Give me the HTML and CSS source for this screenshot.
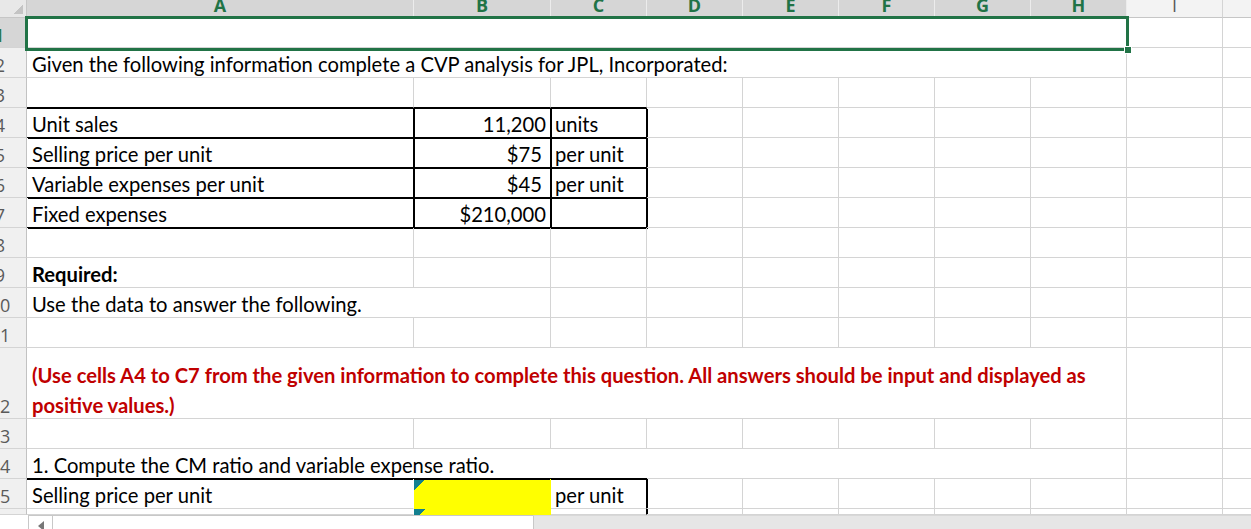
FILE: index.html
```html
<!DOCTYPE html>
<html>
<head>
<meta charset="utf-8">
<title>CVP analysis</title>
<link rel="stylesheet" href="styles.css">
</head>
<body>
<div class="sheet">
  <div class="grid">
    <div class="corner"></div>
    <div class="ch sel"><span>A</span></div>
    <div class="ch sel"><span>B</span></div>
    <div class="ch sel"><span>C</span></div>
    <div class="ch sel"><span>D</span></div>
    <div class="ch sel"><span>E</span></div>
    <div class="ch sel"><span>F</span></div>
    <div class="ch sel"><span>G</span></div>
    <div class="ch sel"><span>H</span></div>
    <div class="ch"><span>I</span></div>
    <div class="ch"><span>J</span></div>

    <div class="rh rsel"><span>1</span></div>
    <div class="c span8"></div>
    <div class="c"></div><div class="c"></div>

    <div class="rh"><span>2</span></div>
    <div class="c span8">Given the following information complete a CVP analysis for JPL, Incorporated:</div>
    <div class="c"></div><div class="c"></div>

    <div class="rh"><span>3</span></div>
    <div class="c bt"></div><div class="c bt"></div><div class="c bt"></div>
    <div class="c"></div><div class="c"></div><div class="c"></div><div class="c"></div><div class="c"></div><div class="c"></div><div class="c"></div>

    <div class="rh"><span>4</span></div>
    <div class="c bx">Unit sales</div>
    <div class="c bx num">11,200</div>
    <div class="c bx unit">units</div>
    <div class="c"></div><div class="c"></div><div class="c"></div><div class="c"></div><div class="c"></div><div class="c"></div><div class="c"></div>

    <div class="rh"><span>5</span></div>
    <div class="c bx">Selling price per unit</div>
    <div class="c bx num cur">$75</div>
    <div class="c bx unit">per unit</div>
    <div class="c"></div><div class="c"></div><div class="c"></div><div class="c"></div><div class="c"></div><div class="c"></div><div class="c"></div>

    <div class="rh"><span>6</span></div>
    <div class="c bx">Variable expenses per unit</div>
    <div class="c bx num cur">$45</div>
    <div class="c bx unit">per unit</div>
    <div class="c"></div><div class="c"></div><div class="c"></div><div class="c"></div><div class="c"></div><div class="c"></div><div class="c"></div>

    <div class="rh"><span>7</span></div>
    <div class="c bx">Fixed expenses</div>
    <div class="c bx num">$210,000</div>
    <div class="c bx unit"></div>
    <div class="c"></div><div class="c"></div><div class="c"></div><div class="c"></div><div class="c"></div><div class="c"></div><div class="c"></div>

    <div class="rh"><span>8</span></div>
    <div class="c"></div><div class="c"></div><div class="c"></div><div class="c"></div><div class="c"></div><div class="c"></div><div class="c"></div><div class="c"></div><div class="c"></div><div class="c"></div>

    <div class="rh"><span>9</span></div>
    <div class="c bold">Required:</div>
    <div class="c"></div><div class="c"></div><div class="c"></div><div class="c"></div><div class="c"></div><div class="c"></div><div class="c"></div><div class="c"></div><div class="c"></div>

    <div class="rh"><span>10</span></div>
    <div class="c span2">Use the data to answer the following.</div>
    <div class="c"></div><div class="c"></div><div class="c"></div><div class="c"></div><div class="c"></div><div class="c"></div><div class="c"></div><div class="c"></div>

    <div class="rh"><span>11</span></div>
    <div class="c"></div><div class="c"></div><div class="c"></div><div class="c"></div><div class="c"></div><div class="c"></div><div class="c"></div><div class="c"></div><div class="c"></div><div class="c"></div>

    <div class="rh"><span>12</span></div>
    <div class="c span8 red"><p>(Use cells A4 to C7 from the given information to complete this question. All answers should be input and displayed as<br>positive values.)</p></div>
    <div class="c"></div><div class="c"></div>

    <div class="rh"><span>13</span></div>
    <div class="c"></div><div class="c"></div><div class="c"></div><div class="c"></div><div class="c"></div><div class="c"></div><div class="c"></div><div class="c"></div><div class="c"></div><div class="c"></div>

    <div class="rh"><span>14</span></div>
    <div class="c span8">1. Compute the CM ratio and variable expense ratio.</div>
    <div class="c"></div><div class="c"></div>

    <div class="rh"><span>15</span></div>
    <div class="c tb noright">Selling price per unit</div>
    <div class="c tb input err"></div>
    <div class="c tb unit rb">per unit</div>
    <div class="c"></div><div class="c"></div><div class="c"></div><div class="c"></div><div class="c"></div><div class="c"></div><div class="c"></div>

    <div class="rh"></div>
    <div class="c noright"></div>
    <div class="c input err"></div>
    <div class="c rb"></div>
    <div class="c"></div><div class="c"></div><div class="c"></div><div class="c"></div><div class="c"></div><div class="c"></div><div class="c"></div>
  </div>

  <div class="selection"><span class="handle"></span></div>

  <div class="hbar">
    <div class="lead"></div>
    <div class="btn"><span class="arrow"></span></div>
    <div class="tabs"></div>
    <div class="track"></div>
  </div>
</div>
</body>
</html>
```

FILE: styles.css
```css
* {
  box-sizing: border-box;
  margin: 0;
  padding: 0;
}

html, body {
  width: 1251px;
  height: 529px;
  overflow: hidden;
  background: #ffffff;
}

body {
  font-family: Lato, "Liberation Sans", sans-serif;
  color: #000000;
}

.sheet {
  position: relative;
  width: 1251px;
  height: 529px;
  overflow: hidden;
  display: flex;
  flex-direction: column;
}

.grid {
  flex: none;
  display: grid;
  grid-template-columns: 27px 387px 137px repeat(8, 96px);
  grid-template-rows: 18px repeat(11, 30px) 71px 30px 30px 30px 6px;
  width: 1319px;
}

/* column headers */
.corner {
  background:
    linear-gradient(135deg, transparent 60%, #c4c4c4 60%) right 3px bottom 3px / 12px 11px no-repeat,
    #e8e8e8;
  border-right: 1px solid #c6c6c6;
  border-bottom: 1px solid #c6c6c6;
}

.ch {
  background: #f3f3f3;
  border-right: 1px solid #d4d4d4;
  border-bottom: 1px solid #c6c6c6;
  display: flex;
  justify-content: center;
  align-items: flex-start;
  overflow: hidden;
  font-family: "Open Sans", "Liberation Sans", sans-serif;
  font-size: 18px;
  color: #5a5a5a;
}

.ch span {
  display: block;
  line-height: 17px;
  margin-top: -3px;
}

.ch.sel {
  background: #d6d6d6;
  border-right-color: #ececec;
  border-bottom: 2px solid #217346;
  color: #217346;
  font-weight: 700;
}

/* row headers */
.rh {
  background: #f0f0f0;
  border-right: 1px solid #c2c2c2;
  border-bottom: 1px solid #d4d4d4;
  display: flex;
  align-items: flex-end;
  overflow: hidden;
  font-family: "Open Sans", "Liberation Sans", sans-serif;
  font-size: 18px;
  color: #5a5a5a;
}

.rh span {
  display: block;
  flex: none;
  width: 44px;
  margin-left: -22px;
  text-align: center;
  line-height: 24px;
}

.rh.rsel {
  background: #d6d6d6;
  color: #217346;
}

/* cells */
.c {
  border-right: 1px solid #d4d4d4;
  border-bottom: 1px solid #d4d4d4;
  display: flex;
  align-items: flex-end;
  padding: 0 4px 0 5px;
  white-space: nowrap;
  font-size: 20.2px;
  line-height: 26px;
}

.span8 { grid-column: span 8; }
.span2 { grid-column: span 2; }

.bold { font-weight: 700; }

.red {
  color: #c00000;
  font-weight: 700;
  line-height: 30px;
}

.red p {
  margin-bottom: -2px;
}

.num {
  justify-content: flex-end;
  padding-right: 4px;
}

.num.cur { padding-right: 8px; }

.unit { padding-left: 4px; }

/* black table borders */
.bt {
  border-bottom-color: #000000;
  box-shadow: 0 1px 0 #000000;
}

.bx {
  border-right-color: #000000;
  border-bottom-color: #000000;
  box-shadow: 1px 1px 0 #000000;
}

.tb {
  box-shadow: 0 -1px 0 #000000, inset 0 1px 0 #000000;
}

.rb {
  border-right-color: #000000;
  box-shadow: 1px 0 0 #000000;
}

.tb.rb {
  box-shadow: 0 -1px 0 #000000, inset 0 1px 0 #000000, 1px 0 0 #000000;
}

.noright { border-right-color: transparent; }

.input {
  background-color: #ffff00;
  border-right-color: transparent;
  border-bottom-color: transparent;
}

.err {
  background-image: linear-gradient(135deg, #13808f 50%, transparent 52%);
  background-size: 12px 11px;
  background-repeat: no-repeat;
}

/* selection overlay */
.selection {
  position: absolute;
  left: 25px;
  top: 16px;
  width: 1104px;
  height: 35px;
  border: 3px solid #217346;
  pointer-events: none;
}

.handle {
  position: absolute;
  right: -6px;
  bottom: -6px;
  width: 8px;
  height: 8px;
  background: #217346;
  border: 1px solid #ffffff;
}

/* bottom sheet-tab bar */
.hbar {
  flex: none;
  height: 14px;
  display: flex;
}

.lead {
  width: 28px;
  background: #ffffff;
}

.btn {
  width: 25px;
  border-top: 1px solid #c8c8c8;
  border-left: 1px solid #c8c8c8;
  border-right: 1px solid #c8c8c8;
  display: flex;
  justify-content: center;
  padding-top: 5px;
  background: #ffffff;
}

.arrow {
  width: 0;
  height: 0;
  border-top: 5px solid transparent;
  border-bottom: 5px solid transparent;
  border-right: 6px solid #777777;
}

.tabs {
  width: 480px;
  border-top: 1px solid #c8c8c8;
  background: #ffffff;
}

.track {
  flex: 1;
  background: #e6e6e6;
  border-left: 1px solid #c8c8c8;
  border-top: 1px solid #d8d8d8;
}
```
